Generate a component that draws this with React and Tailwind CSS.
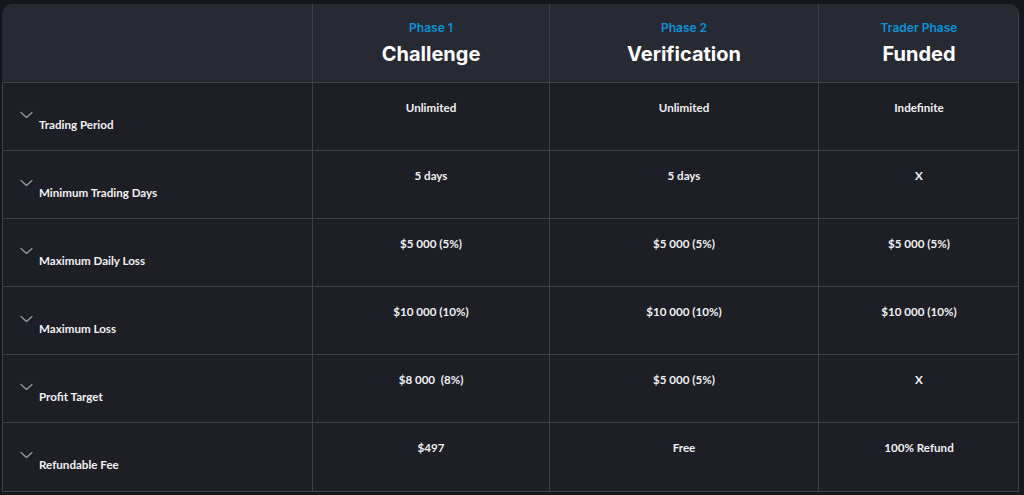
const PHASES = [
  { tag: 'Phase 1', title: 'Challenge' },
  { tag: 'Phase 2', title: 'Verification' },
  { tag: 'Trader Phase', title: 'Funded' },
];

const ROWS = [
  { label: 'Trading Period', values: ['Unlimited', 'Unlimited', 'Indefinite'] },
  { label: 'Minimum Trading Days', values: ['5 days', '5 days', 'X'] },
  { label: 'Maximum Daily Loss', values: ['$5 000 (5%)', '$5 000 (5%)', '$5 000 (5%)'] },
  { label: 'Maximum Loss', values: ['$10 000 (10%)', '$10 000 (10%)', '$10 000 (10%)'] },
  { label: 'Profit Target', values: ['$8 000  (8%)', '$5 000 (5%)', 'X'] },
  { label: 'Refundable Fee', values: ['$497', 'Free', '100% Refund'] },
];

function Chevron() {
  return (
    <svg className="w-[13px] h-[8px] text-[#9a9ca6]" viewBox="0 0 13 8" fill="none" stroke="currentColor" strokeWidth="1.2">
      <path d="M1 1.5l5.5 5 5.5-5" strokeLinecap="round" strokeLinejoin="round" />
    </svg>
  );
}

export default function App() {
  const cols = 'grid grid-cols-[311px_237px_269px_200px]';
  return (
    <div className="w-[1024px] h-[495px] bg-[#15171e] pt-[4px] pl-[2px] overflow-hidden">
      <div className="w-[1017px] rounded-t-[10px] overflow-hidden border-r border-b border-[#3f414a]">
        {/* Header */}
        <div className={`${cols} h-[79px] bg-[#282a33]`}>
          <div className="border-r border-b border-[#3f414a]" />
          {PHASES.map((p, i) => (
            <div
              key={p.tag}
              className={`flex flex-col items-center pt-[17px] border-b border-[#3f414a] ${i < 2 ? 'border-r' : ''}`}
            >
              <span className="text-[12px] leading-[14px] font-semibold text-[#0b94dc] font-['Inter',sans-serif]">{p.tag}</span>
              <span className="mt-[7px] text-[20px] leading-[24px] font-bold text-white font-['Inter',sans-serif]">{p.title}</span>
            </div>
          ))}
        </div>

        {/* Body */}
        {ROWS.map((row, r) => (
          <div key={row.label} className={`${cols} h-[68px] bg-[#1d1e26] font-['Lato',sans-serif]`}>
            <div className={`border-r border-l border-[#3f414a] ${r < ROWS.length - 1 ? 'border-b' : ''} pl-[17px] pt-[28px] flex items-start gap-[6px]`}>
              <Chevron />
              <span className="mt-[7px] text-[11.6px] leading-[14px] font-bold text-[#f1f1f3]">{row.label}</span>
            </div>
            {row.values.map((v, i) => (
              <div
                key={i}
                className={`border-[#3f414a] ${r < ROWS.length - 1 ? 'border-b' : ''} ${i < 2 ? 'border-r' : ''} pt-[18px] text-center text-[11.6px] leading-[14px] font-bold text-[#f1f1f3] whitespace-pre`}
              >
                {v}
              </div>
            ))}
          </div>
        ))}
      </div>
    </div>
  );
}
